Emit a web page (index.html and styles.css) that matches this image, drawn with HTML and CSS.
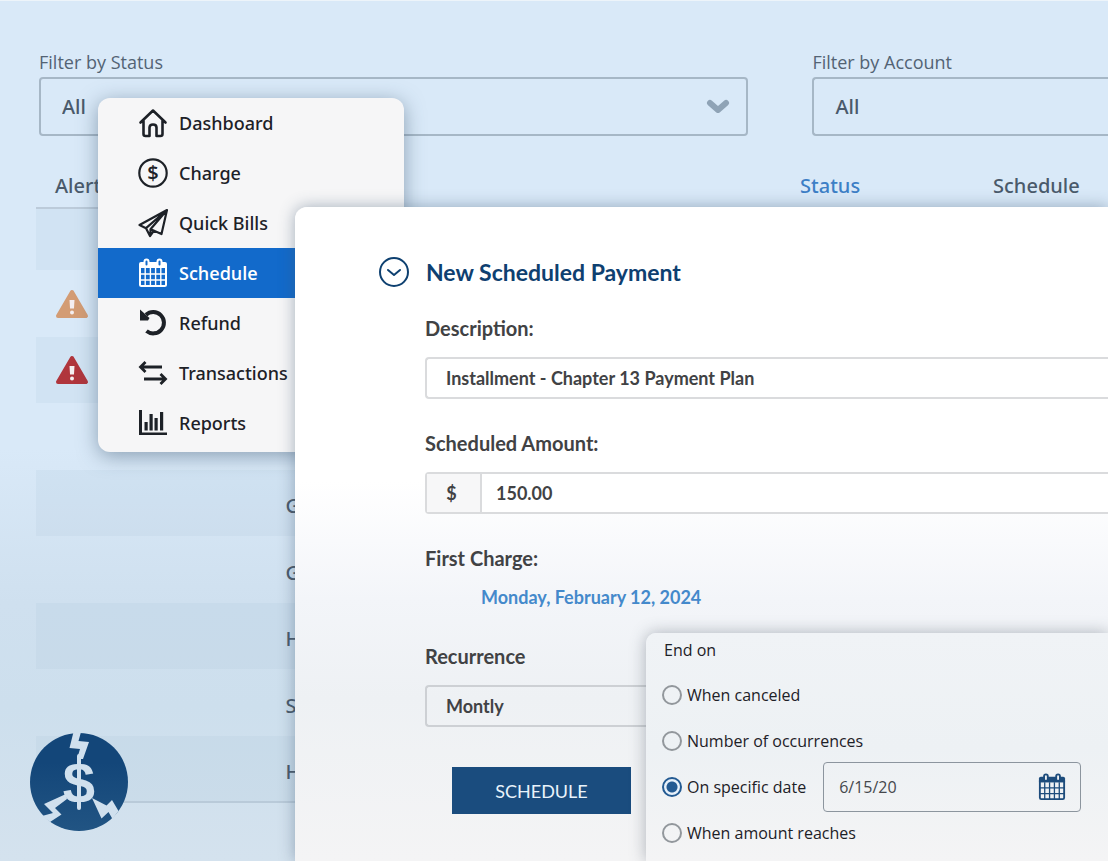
FILE: index.html
```html
<!DOCTYPE html>
<html lang="en">
<head>
<meta charset="utf-8">
<meta name="viewport" content="width=device-width, initial-scale=1">
<title>New Scheduled Payment</title>
<link rel="stylesheet" href="styles.css">
</head>
<body>
<svg class="defs" aria-hidden="true">
  <symbol id="calendar" viewBox="0 0 30 30">
    <path d="M1 10V6q0-2 2-2h24q2 0 2 2v4z" fill="currentColor"/>
    <path d="M2 9h26v17.500q0 1.500-1.500 1.500h-23Q2 28 2 26.500z" fill="none" stroke="currentColor" stroke-width="2"/>
    <path d="M7.200 10v18M12.400 10v18M17.600 10v18M22.800 10v18M2 16h26M2 22h26" fill="none" stroke="currentColor" stroke-width="1.400"/>
    <rect class="ring" x="6.500" y="1.500" width="4" height="7" rx="2"/>
    <rect class="ring" x="19.500" y="1.500" width="4" height="7" rx="2"/>
  </symbol>
  <symbol id="warning" viewBox="0 0 34 30">
    <path d="M17 3L31 27H3z" fill="currentColor" stroke="currentColor" stroke-width="4" stroke-linejoin="round"/>
    <path d="M14.500 11h5l-.5 8.500h-4z" fill="#f4eef0"/>
    <circle cx="17" cy="23.500" r="2" fill="#f4eef0"/>
  </symbol>
</svg>

<div class="stage">
  <main class="ledger">
    <form class="filters">
      <div class="filter">
        <label for="f-status">Filter by Status</label>
        <div class="picker">
          <select id="f-status"><option>All</option></select>
          <svg class="chevron" viewBox="0 0 24 16" aria-hidden="true"><path d="M4 4l8 7 8-7" fill="none" stroke="currentColor" stroke-width="6" stroke-linecap="round" stroke-linejoin="round"/></svg>
        </div>
      </div>
      <div class="filter">
        <label for="f-account">Filter by Account</label>
        <div class="picker open-end">
          <select id="f-account"><option>All</option></select>
        </div>
      </div>
    </form>

    <table class="rows">
      <colgroup><col class="c-alert"><col class="c-name"><col class="c-status"><col></colgroup>
      <thead>
        <tr><th class="alert">Alert</th><th></th><th><a href="#status">Status</a></th><th>Schedule</th></tr>
      </thead>
      <tbody>
        <tr class="lead"><td></td><td></td><td></td><td></td></tr>
        <tr><td class="alert"><svg class="warn amber" role="img" aria-label="Warning"><use href="#warning"/></svg></td><td></td><td></td><td></td></tr>
        <tr><td class="alert"><svg class="warn red" role="img" aria-label="Error"><use href="#warning"/></svg></td><td></td><td></td><td></td></tr>
        <tr><td></td><td></td><td></td><td></td></tr>
        <tr><td></td><td class="name">G</td><td></td><td></td></tr>
        <tr><td></td><td class="name">G</td><td></td><td></td></tr>
        <tr><td></td><td class="name">H</td><td></td><td></td></tr>
        <tr><td></td><td class="name">S</td><td></td><td></td></tr>
        <tr><td></td><td class="name">H</td><td></td><td></td></tr>
      </tbody>
    </table>
  </main>

  <nav class="menu">
    <a href="#dashboard">
      <svg viewBox="0 0 30 30" fill="none" stroke="currentColor" stroke-width="2.600" stroke-linejoin="round" stroke-linecap="round"><path d="M2.500 14.500L15 2.500l12.500 12M5.500 12.500v13.500q0 2 2 2h4v-8.500q0-3 3.500-3t3.500 3v8.500h4q2 0 2-2V12.500"/></svg>
      Dashboard</a>
    <a href="#charge">
      <svg viewBox="0 0 30 30"><circle cx="15" cy="15" r="13.700" fill="none" stroke="currentColor" stroke-width="2.200"/><text class="coin" x="15" y="22" text-anchor="middle">$</text></svg>
      Charge</a>
    <a href="#quick-bills">
      <svg viewBox="0 0 30 30" fill="none" stroke="currentColor" stroke-width="2.200" stroke-linejoin="round"><path d="M29 2L1.500 17l6.500 3.200 4 7.800 4-5.300 7.500 3.300zM29 2L8 20.200M29 2L12.500 21.200V28M12.500 21.200l3.500 1.500"/></svg>
      Quick Bills</a>
    <a class="current" href="#schedule" aria-current="page">
      <svg><use href="#calendar"/></svg>
      Schedule</a>
    <a href="#refund">
      <svg viewBox="0 0 30 30"><path d="M8 6.800A10.700 10.700 0 1 1 8.500 23" fill="none" stroke="currentColor" stroke-width="4"/><path d="M2 1.500l9.500 8.500-1.500 2.500H2z" fill="currentColor"/></svg>
      Refund</a>
    <a href="#transactions">
      <svg viewBox="0 0 30 30" fill="none" stroke="currentColor" stroke-width="2.800"><path d="M24 9H2.500M7.500 4l-5 5 5 5M6 21h21.500M22.500 16l5 5-5 5"/></svg>
      Transactions</a>
    <a href="#reports">
      <svg viewBox="0 0 30 30" fill="currentColor"><path d="M1 2h3v22.500h25V27H1zM6.500 14h3.200v8.500H6.500zM11.500 6h3.200v16.500h-3.200zM16.500 10h3.200v12.500h-3.200zM22 4h3.200v18.500H22z"/></svg>
      Reports</a>
  </nav>

  <form class="card">
    <h1 class="card-head">
      <svg viewBox="0 0 30 30" fill="none" stroke="currentColor" stroke-width="2" stroke-linecap="round" stroke-linejoin="round" aria-hidden="true"><circle cx="15" cy="15" r="14"/><path d="M9 13l6 5 6-5"/></svg>
      New Scheduled Payment
    </h1>
    <div class="fields">
      <div class="field">
        <label for="description">Description:</label>
        <input class="box" id="description" type="text" value="Installment - Chapter 13 Payment Plan">
      </div>
      <div class="field">
        <label for="amount">Scheduled Amount:</label>
        <div class="box money">
          <span class="unit">$</span>
          <input id="amount" type="text" value="150.00">
        </div>
      </div>
      <div class="field first">
        <span class="label">First Charge:</span>
        <a href="#date">Monday, February 12, 2024</a>
      </div>
      <div class="field">
        <label for="recurrence">Recurrence</label>
        <select class="box" id="recurrence"><option>Montly</option></select>
      </div>
      <button class="submit" type="button">SCHEDULE</button>
    </div>
  </form>

  <fieldset class="ending">
    <legend>End on</legend>
    <div class="choice"><input type="radio" name="end" id="e1"><label for="e1">When canceled</label></div>
    <div class="choice"><input type="radio" name="end" id="e2"><label for="e2">Number of occurrences</label></div>
    <div class="choice"><input type="radio" name="end" id="e3" checked><label for="e3">On specific date</label>
      <div class="date"><input type="text" value="6/15/20" aria-label="End date"><svg><use href="#calendar"/></svg></div>
    </div>
    <div class="choice"><input type="radio" name="end" id="e4"><label for="e4">When amount reaches</label></div>
  </fieldset>

  <svg class="logo" viewBox="0 0 98 98" role="img" aria-label="Split dollar logo">
    <defs><linearGradient id="navy" x1="0" y1="0" x2="0" y2="1"><stop offset="0.300" stop-color="#134679"/><stop offset="1" stop-color="#215483"/></linearGradient></defs>
    <circle cx="49" cy="49" r="49" fill="url(#navy)"/>
    <g fill="#d0e0ee">
      <path d="M43.500-1L39.500 15l10.500 1-3 10h6l6-17-10.500-1L51-1z"/>
      <path d="M36 61L14 71l9 9-11 3 8 6 11.500-7.500L25 75l12-9z"/>
      <path d="M62 65l9.500 20.500 7-6.500 4 7 6-8L82 67l-5.500 5.500z"/>
      <text class="logo-mark" x="49" y="70" text-anchor="middle">$</text>
      <rect x="47" y="21" width="4" height="56" rx="2"/>
    </g>
  </svg>
</div>
</body>
</html>
```
FILE: styles.css
```css
* {
  box-sizing: border-box;
}

body {
  margin: 0;
  font-family: "Noto Sans", "Open Sans", sans-serif;
  color: #1d2127;
}

input,
select,
button {
  font: inherit;
  color: inherit;
  appearance: none;
  border-radius: 0;
  background: none;
  border: 0;
  margin: 0;
  padding: 0;
}

a {
  color: inherit;
  text-decoration: none;
}

.defs {
  position: absolute;
  width: 0;
  height: 0;
}

.stage {
  position: relative;
  min-height: 100vh;
  overflow: hidden;
  border-top: 1px solid #edf4fa;
  background: linear-gradient(#d9e9f8 0, #d9e9f8 52%, #cfe0ef 70%, #cddfed 82%, #d4e2ee 100%);
}

/* Ledger behind the panels */

.ledger {
  padding: 49px 0 56px;
  color: #4a5a6b;
}

.filters {
  display: grid;
  grid-template-columns: 12fr 5fr;
  gap: 64px;
  padding-left: 39px;
}

.filter label {
  display: block;
  font-family: "Open Sans", sans-serif;
  font-size: 18px;
  line-height: 24px;
  margin-bottom: 3px;
  color: #536374;
}

.picker {
  display: flex;
  align-items: center;
  height: 59px;
  border: 2px solid #a6b7c6;
  border-radius: 4px;
  padding: 0 16px 0 21px;
  font-size: 20px;
  font-weight: 500;
}

.picker select {
  flex: 1;
  height: 100%;
}

.open-end {
  border-right: 0;
  border-radius: 4px 0 0 4px;
}

.chevron {
  width: 24px;
  height: 16px;
  color: #8fa3b6;
}

.rows {
  width: calc(100% - 36px);
  margin: 28px 0 0 36px;
  table-layout: fixed;
  border-collapse: collapse;
  font-size: 20px;
  font-weight: 500;
  border-bottom: 2px solid #b9cad9;
}

.c-alert {
  width: 23%;
}

.c-name {
  width: 48%;
}

.c-status {
  width: 18%;
}

.rows th {
  height: 44px;
  padding: 0 0 0 3px;
  font-weight: 500;
  text-align: left;
  border-bottom: 2px solid #bccbda;
}

.rows td {
  height: 66px;
  padding: 0 0 0 3px;
}

.rows tr:nth-child(even) td {
  height: 67px;
}

.rows .lead td {
  height: 62px;
}

.rows .alert {
  padding-left: 19px;
}

.rows .name {
  padding-top: 5px;
}

.rows a {
  color: #3d7fc6;
}

.rows tbody tr:nth-child(odd) {
  background: rgba(160, 190, 215, 0.14);
}

.warn {
  display: block;
  width: 34px;
  height: 30px;
}

.amber {
  color: #d39c74;
}

.red {
  color: #b0353c;
}

/* Floating navigation */

.menu {
  position: absolute;
  left: 98px;
  top: 97px;
  width: 306px;
  padding-bottom: 4px;
  overflow: hidden;
  border-radius: 12px;
  background: #f6f6f7;
  box-shadow: 0 4px 20px rgba(60, 85, 110, 0.5);
  font-size: 18px;
  font-weight: 500;
}

.menu a {
  display: flex;
  align-items: center;
  gap: 11px;
  height: 50px;
  padding-left: 40px;
}

.menu svg {
  width: 30px;
  height: 30px;
}

.menu .current {
  color: #ffffff;
  background: #126acb;
  font-family: "Open Sans", sans-serif;
  font-weight: 600;
}

.coin {
  font: 600 20px "Open Sans", sans-serif;
  fill: currentColor;
}

.ring {
  fill: var(--slot, #126acb);
  stroke: currentColor;
  stroke-width: 2;
}

/* Payment form */

.card {
  position: absolute;
  left: 295px;
  right: 0;
  top: 206px;
  bottom: 0;
  padding: 50px 0 0 84px;
  border-radius: 12px 0 0 0;
  background: linear-gradient(#ffffff 0, #ffffff 42%, #f3f5f9 60%, #eef1f4 75%, #f4f4f5 100%);
  box-shadow: 0 0 16px rgba(60, 85, 110, 0.45);
  font-family: Lato, sans-serif;
  font-weight: 700;
  color: #414244;
}

.card-head {
  display: flex;
  align-items: center;
  gap: 17px;
  margin: 0;
  font-size: 23px;
  line-height: 30px;
  color: #0e4070;
}

.card-head svg {
  width: 30px;
  height: 30px;
}

.fields {
  padding: 29px 0 0 46px;
}

.field {
  margin-bottom: 32px;
}

.field label,
.field .label {
  display: block;
  margin-bottom: 17px;
  font-size: 20px;
  line-height: 24px;
}

.box {
  display: flex;
  width: 100%;
  height: 42px;
  border: 2px solid #dadbdd;
  border-right: 0;
  border-radius: 4px 0 0 4px;
  padding-left: 19px;
  font-size: 18px;
}

input.box,
.money {
  background: #ffffff;
}

select.box {
  border-color: #cdd0d4;
}

.money {
  padding: 0;
}

.unit {
  display: flex;
  align-items: center;
  justify-content: center;
  width: 55px;
  padding-right: 4px;
  border-right: 2px solid #dadbdd;
  background: #f7f7f8;
}

.money input {
  flex: 1;
  padding-left: 14px;
}

.first a {
  display: block;
  padding-left: 56px;
  font-size: 18px;
  line-height: 24px;
  color: #4489cb;
}

.first .label {
  margin-bottom: 15px;
}

.first {
  margin-bottom: 35px;
}

.submit {
  display: block;
  width: 179px;
  height: 47px;
  margin: 40px 0 0 27px;
  background: #1a4c7e;
  color: #e9f3fb;
  font-size: 18px;
  font-weight: 400;
}

/* End condition panel */

.ending {
  position: absolute;
  left: 646px;
  right: 0;
  top: 632px;
  bottom: 0;
  margin: 0;
  padding: 5px 16px 0;
  border: 0;
  border-radius: 10px 0 0 0;
  background: linear-gradient(#f0f3f6, #edf1f4 50%, #f4f4f5);
  box-shadow: 0 0 16px rgba(70, 80, 95, 0.4);
  font-family: "Open Sans", sans-serif;
  font-size: 16px;
}

.ending legend {
  float: left;
  width: 100%;
  padding: 0 0 0 2px;
  line-height: 24px;
  margin-bottom: 10px;
}

.choice {
  clear: both;
  display: flex;
  align-items: center;
  gap: 5px;
  height: 46px;
}

.choice input[type="radio"] {
  width: 20px;
  height: 20px;
  border: 2px solid #92979c;
  border-radius: 50%;
}

.choice input[type="radio"]:checked {
  border-color: #235a92;
  background: radial-gradient(circle, #235a92 0, #235a92 5px, #e6f0fa 6px);
}

.date {
  display: flex;
  align-items: center;
  width: 258px;
  height: 50px;
  margin-left: 12px;
  padding: 0 14px 0 15px;
  border: 1px solid #8c959e;
  border-radius: 4px;
  color: #45484c;
}

.date input {
  flex: 1;
  min-width: 0;
}

.date svg {
  width: 28px;
  height: 28px;
  color: #1d4c7c;
  --slot: #eef1f4;
}

/* Brand mark */

.logo {
  position: absolute;
  left: 30px;
  bottom: 30px;
  width: 98px;
  height: 98px;
}

.logo-mark {
  font: 700 58px "Liberation Sans", sans-serif;
}
```
